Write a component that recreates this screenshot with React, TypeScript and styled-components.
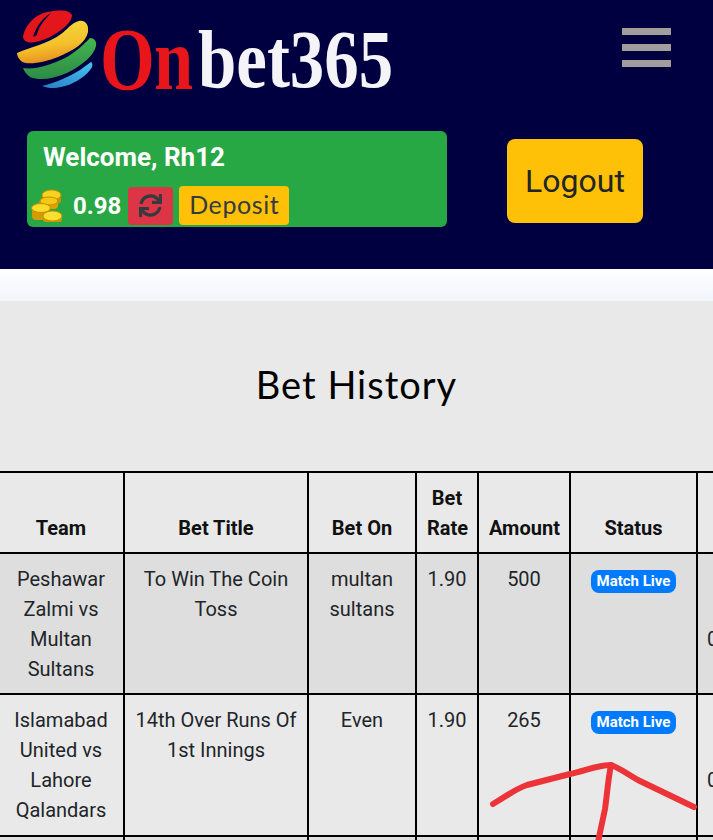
import * as React from 'react';
import styled, { createGlobalStyle } from 'styled-components';
import { FaSync } from 'react-icons/fa';

const Global = createGlobalStyle`
  html, body {
    margin: 0;
    padding: 0;
    height: 840px;
    overflow: hidden;
    background: #fff;
    font-family: Roboto, "Liberation Sans", sans-serif;
  }
  * { box-sizing: border-box; }
`;

const Page = styled.div`
  position: relative;
  width: 713px;
  height: 840px;
  overflow: hidden;
`;

const Header = styled.header`
  height: 269px;
  background: #000040;
  padding: 10px 42px 0 17px;
`;

const TopRow = styled.div`
  display: flex;
  justify-content: space-between;
  align-items: flex-start;
  height: 121px;
`;

const Logo = styled.div`
  display: flex;
  align-items: flex-end;
  height: 80px;
`;

const LogoWord = styled.span<{ $red?: boolean }>`
  display: block;
  width: ${p => (p.$red ? 98 : 192)}px;
  margin-bottom: -6px;
  font-family: "Liberation Serif", serif;
  font-weight: 700;
  font-size: ${p => (p.$red ? 88 : 82)}px;
  line-height: 72px;
  white-space: nowrap;
  letter-spacing: ${p => (p.$red ? -1 : 0)}px;
  color: ${p => (p.$red ? '#e8151b' : '#f4f4f8')};
  transform: scaleX(${p => (p.$red ? 0.8 : 0.84)});
  transform-origin: left bottom;
`;

const Burger = styled.div`
  display: flex;
  flex-direction: column;
  gap: 9px;
  width: 49px;
  margin-top: 18px;
`;

const BurgerBar = styled.span`
  display: block;
  height: 7px;
  background: #a29c9c;
`;

const AccountRow = styled.div`
  display: flex;
  align-items: flex-start;
  padding-left: 10px;
`;

const WelcomeCard = styled.div`
  width: 420px;
  height: 96px;
  background: #28a745;
  border-radius: 6px;
  padding: 9px 4px 0;
  color: #fff;
`;

const WelcomeText = styled.div`
  font-size: 26px;
  font-weight: 700;
  line-height: 34px;
  padding-left: 12px;
`;

const BalanceRow = styled.div`
  display: flex;
  align-items: center;
  margin-top: 12px;
`;

const Balance = styled.span`
  font-size: 24px;
  font-weight: 700;
  margin: 0 7px 0 10px;
`;

const RefreshButton = styled.button`
  width: 45px;
  height: 38px;
  padding: 0;
  display: flex;
  align-items: center;
  justify-content: center;
  border: 0;
  border-radius: 4px;
  background: #dc3545;
  color: #343a40;
  font-size: 23px;
`;

const DepositButton = styled.button`
  width: 110px;
  height: 39px;
  margin-left: 6px;
  padding: 0 0 3px;
  border: 0;
  border-radius: 4px;
  background: #ffc107;
  color: #343a40;
  font-family: Lato, sans-serif;
  font-size: 25px;
  letter-spacing: 0.6px;
`;

const LogoutButton = styled.button`
  width: 136px;
  height: 84px;
  margin: 8px 0 0 60px;
  padding: 0;
  border: 0;
  border-radius: 8px;
  background: #ffc107;
  color: #212529;
  font-family: Roboto, sans-serif;
  font-size: 32px;
`;

const Fade = styled.div`
  height: 32px;
  background: linear-gradient(#ffffff, #f1f4fb);
`;

const Panel = styled.section`
  background: #e9e9e9;
  height: 539px;
  padding-top: 59px;
`;

const Title = styled.h1`
  margin: 0;
  height: 111px;
  text-align: center;
  font-family: Lato, sans-serif;
  font-weight: 400;
  font-size: 38px;
  line-height: 48px;
  letter-spacing: 1px;
  color: #000;
`;

const Table = styled.table`
  table-layout: fixed;
  width: 860px;
  margin-left: -3px;
  border-collapse: collapse;
  color: #212529;
  font-size: 20px;
  line-height: 30px;
`;

const HeadCell = styled.th`
  border: 2px solid #000;
  padding: 10px 10px 9px;
  vertical-align: bottom;
  text-align: center;
  font-weight: 700;
  color: #111;
`;

const Cell = styled.td`
  border: 2px solid #000;
  padding: 10px;
  text-align: center;
  vertical-align: top;
`;

const Row = styled.tr<{ $striped?: boolean }>`
  background: ${p => (p.$striped ? '#dedede' : 'transparent')};
  ${Cell} {
    padding-bottom: ${p => (p.$striped ? 9 : 10)}px;
  }
`;

/* value sits on the third line of its cell, the rest is off the page */
const LastCell = styled(Cell)`
  text-align: left;
  padding-top: 70px;
  padding-left: 9px;
`;

const Badge = styled.span`
  display: inline-block;
  padding: 0 6px;
  height: 23px;
  line-height: 23px;
  border-radius: 8px;
  background: #007bff;
  color: #fff;
  font-size: 15px;
  font-weight: 700;
  vertical-align: top;
  margin-top: 6px;
`;

const Scribble = styled.svg`
  position: absolute;
  left: 0;
  top: 0;
  pointer-events: none;
`;

const BallMark = () => (
  <svg width="81" height="80" viewBox="0 0 81 80" style={{ marginRight: 2, flexShrink: 0 }}>
    <defs>
      <linearGradient id="yolk" x1="0.3" y1="0" x2="0.55" y2="1">
        <stop offset="0" stopColor="#f7dc3c" />
        <stop offset="0.6" stopColor="#f3bf2b" />
        <stop offset="1" stopColor="#e88a1e" />
      </linearGradient>
      <linearGradient id="leaf" x1="0.4" y1="0" x2="0.5" y2="1">
        <stop offset="0" stopColor="#46b84f" />
        <stop offset="1" stopColor="#2b8a45" />
      </linearGradient>
      <linearGradient id="sky" x1="0.8" y1="0" x2="0.2" y2="1">
        <stop offset="0" stopColor="#45c0ee" />
        <stop offset="1" stopColor="#2a83c9" />
      </linearGradient>
    </defs>
    <path d="M6 27C7 18 16 5 30 2C40 0 52 -1 55 5C55 12 46 20 33 27C24 31 8 37 6 27Z" fill="#e3161c" />
    <path d="M16 27C19 17 25 8 34 3C27 10 21 18 20 25Z" fill="#000040" />
    <path d="M0 43C14 37 32 33 44 24C50 20 54 13 62 11C68 10 72 14 71 22C69 32 58 40 41 47C28 52 10 56 4 51C2 49 0 46 0 43Z" fill="url(#yolk)" />
    <path d="M6 58C18 60 33 55 48 48C58 43 67 34 73 28C77 28 80 31 79 36C77 45 66 55 50 63C36 69 22 71 13 67C9 64 7 61 6 58Z" fill="url(#leaf)" />
    <path d="M25 76C38 73 52 67 63 60C67 57 71 54 74 52C76 53 76 57 73 60C67 68 55 75 44 77C37 79 30 78 25 76Z" fill="url(#sky)" />
  </svg>
);

const Coins = () => (
  <svg width="32" height="34" viewBox="0 0 32 34" style={{ flexShrink: 0 }}>
    <rect x="11" y="6" width="19" height="9" rx="4" fill="#c99400" />
    <ellipse cx="20.5" cy="6" rx="9.5" ry="5" fill="#f7d21e" stroke="#c48f00" />
    <rect x="8" y="11" width="19" height="9" rx="4" fill="#d9a300" />
    <ellipse cx="18" cy="12" rx="9" ry="4" fill="#f3c915" stroke="#c48f00" />
    <rect x="1" y="18" width="18" height="13" rx="4" fill="#d39c00" />
    <ellipse cx="10" cy="19" rx="9.5" ry="4.5" fill="#fbdc2a" stroke="#c48f00" />
    <rect x="12" y="27" width="19" height="6" rx="3" fill="#cf9800" />
    <ellipse cx="21.5" cy="27" rx="9.5" ry="5" fill="#fade30" stroke="#c48f00" />
  </svg>
);

const bets = [
  { team: 'Peshawar Zalmi vs Multan Sultans', title: 'To Win The Coin Toss', on: 'multan sultans', rate: '1.90', amount: '500', striped: true },
  { team: 'Islamabad United vs Lahore Qalandars', title: '14th Over Runs Of 1st Innings', on: 'Even', rate: '1.90', amount: '265', striped: false },
];

const App: React.FunctionComponent = () => {
  return (
    <Page>
      <Global />
      <Header>
        <TopRow>
          <Logo>
            <BallMark />
            <LogoWord $red>On</LogoWord>
            <LogoWord>bet365</LogoWord>
          </Logo>
          <Burger>
            <BurgerBar />
            <BurgerBar />
            <BurgerBar />
          </Burger>
        </TopRow>
        <AccountRow>
          <WelcomeCard>
            <WelcomeText>Welcome, Rh12</WelcomeText>
            <BalanceRow>
              <Coins />
              <Balance>0.98</Balance>
              <RefreshButton aria-label="Refresh"><FaSync /></RefreshButton>
              <DepositButton>Deposit</DepositButton>
            </BalanceRow>
          </WelcomeCard>
          <LogoutButton>Logout</LogoutButton>
        </AccountRow>
      </Header>
      <Fade />
      <Panel>
        <Title>Bet History</Title>
        <Table>
          <colgroup>
            <col style={{ width: 126 }} />
            <col style={{ width: 184 }} />
            <col style={{ width: 108 }} />
            <col style={{ width: 62 }} />
            <col style={{ width: 92 }} />
            <col style={{ width: 127 }} />
            <col style={{ width: 161 }} />
          </colgroup>
          <thead>
            <tr>
              <HeadCell>Team</HeadCell>
              <HeadCell>Bet Title</HeadCell>
              <HeadCell>Bet On</HeadCell>
              <HeadCell>Bet Rate</HeadCell>
              <HeadCell>Amount</HeadCell>
              <HeadCell>Status</HeadCell>
              <HeadCell />
            </tr>
          </thead>
          <tbody>
            {bets.map(bet => (
              <Row key={bet.team} $striped={bet.striped}>
                <Cell>{bet.team}</Cell>
                <Cell>{bet.title}</Cell>
                <Cell>{bet.on}</Cell>
                <Cell>{bet.rate}</Cell>
                <Cell>{bet.amount}</Cell>
                <Cell><Badge>Match Live</Badge></Cell>
                <LastCell>0</LastCell>
              </Row>
            ))}
            <Row $striped>
              <Cell /><Cell /><Cell /><Cell /><Cell /><Cell /><Cell />
            </Row>
          </tbody>
        </Table>
      </Panel>
      {/* pen marks drawn over the screenshot */}
      <Scribble width="713" height="840" viewBox="0 0 713 840">
        <g fill="none" stroke="#ec3338" strokeWidth="6" strokeLinecap="round" strokeLinejoin="round">
          <path d="M493 804C505 797 515 789 527 785L570 774C585 771 597 765 611 765C622 769 628 775 640 781L694 807" />
          <path d="M611 765C608 780 607 795 605 809L598 842" />
        </g>
      </Scribble>
    </Page>
  );
};

export default App;
